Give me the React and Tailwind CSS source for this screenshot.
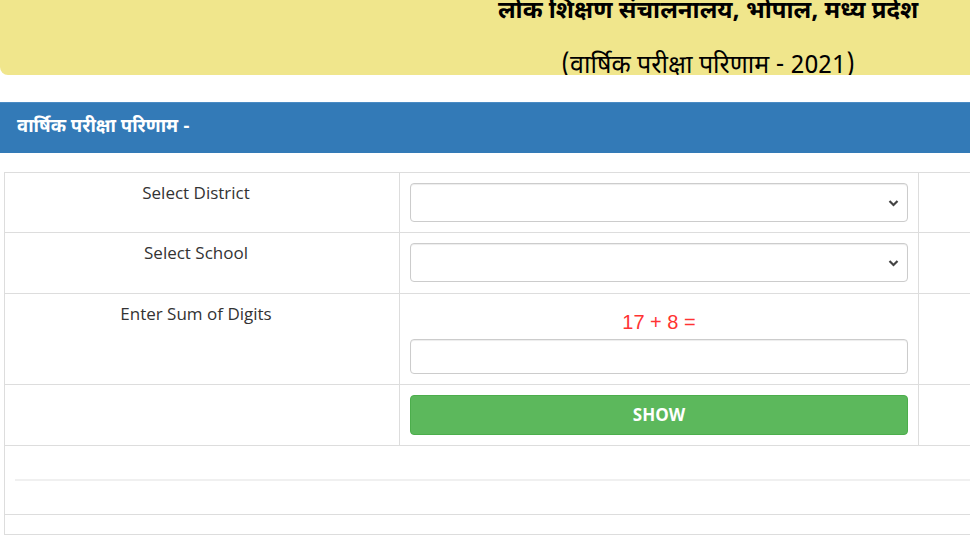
import React from "react";

const Chevron = () => (
  <svg width="11" height="8" viewBox="0 0 11 8" className="absolute right-[8px] top-1/2 -translate-y-1/2">
    <path d="M1.5 2 L5.5 6 L9.5 2" fill="none" stroke="#444" strokeWidth="2.2" />
  </svg>
);

const SelectBox = () => (
  <div className="relative h-[39px] w-full rounded-[4px] border border-[#ccc] bg-white shadow-[inset_0_1px_1px_rgba(0,0,0,0.075)]">
    <Chevron />
  </div>
);

const Label = ({ children }) => (
  <div className="border-r border-[#ddd] pl-[10px] pr-[22px] pt-[10px] text-center text-[17px] font-medium leading-[20px] text-[#333]">
    {children}
  </div>
);

export default function App() {
  const deva = { fontFamily: '"Noto Sans Devanagari", "Noto Sans", "Open Sans", sans-serif' };

  return (
    <div className="w-[970px] h-[545px] overflow-hidden bg-white" style={{ fontFamily: '"Open Sans", "Noto Sans", sans-serif' }}>
      {/* Header */}
      <div className="w-[1416px] h-[75px] overflow-hidden rounded-bl-lg bg-[#f0e68c] text-center text-black" style={deva}>
        <div className="-mt-[5px] text-[24px] font-bold leading-[34px]">लोक शिक्षण संचालनालय, भोपाल, मध्य प्रदेश</div>
        <div className="mt-[21px] text-[25px] leading-[34px]">(वार्षिक परीक्षा परिणाम - 2021)</div>
      </div>

      {/* Panel heading */}
      <div className="mt-[27px] flex h-[51px] items-center border-t border-[#4a8bc4] bg-[#337ab7] pl-[17px] text-[18.5px] font-bold text-white" style={deva}>
        वार्षिक परीक्षा परिणाम -
      </div>

      {/* Form table */}
      <div className="mt-[19px] ml-[4px] w-[1100px] border-l border-t border-[#ddd]">
        <div className="grid grid-cols-[395px_519px_1fr] border-b border-[#ddd]">
          <Label>Select District</Label>
          <div className="border-r border-[#ddd] p-[10px]">
            <SelectBox />
          </div>
          <div />
        </div>
        <div className="grid grid-cols-[395px_519px_1fr] border-b border-[#ddd]">
          <Label>Select School</Label>
          <div className="border-r border-[#ddd] p-[10px] pb-[11px]">
            <SelectBox />
          </div>
          <div />
        </div>
        <div className="grid grid-cols-[395px_519px_1fr] border-b border-[#ddd]">
          <Label>Enter Sum of Digits</Label>
          <div className="border-r border-[#ddd] p-[10px]">
            <div className="mt-[6px] mb-[5px] text-center text-[20px] leading-[24px] text-[#f33]" style={{ fontFamily: '"Liberation Sans", Arial, sans-serif' }}>
              17 + 8 =
            </div>
            <div className="h-[35px] w-full rounded-[4px] border border-[#ccc] bg-white shadow-[inset_0_1px_1px_rgba(0,0,0,0.075)]" />
          </div>
          <div />
        </div>
        <div className="grid grid-cols-[395px_519px_1fr] border-b border-[#ddd]">
          <div className="border-r border-[#ddd]" />
          <div className="border-r border-[#ddd] p-[10px]">
            <button className="flex h-[40px] w-full items-center justify-center rounded-[4px] border border-[#4cae4c] bg-[#5cb85c] text-[17px] font-bold text-white">
              SHOW
            </button>
          </div>
          <div />
        </div>
        <div className="h-[69px] border-b border-[#ddd] px-[10px]">
          <div className="h-[35px] border-b-2 border-[#f0f0f0]" />
        </div>
        <div className="h-[20px] border-b border-[#ddd]" />
      </div>
    </div>
  );
}
